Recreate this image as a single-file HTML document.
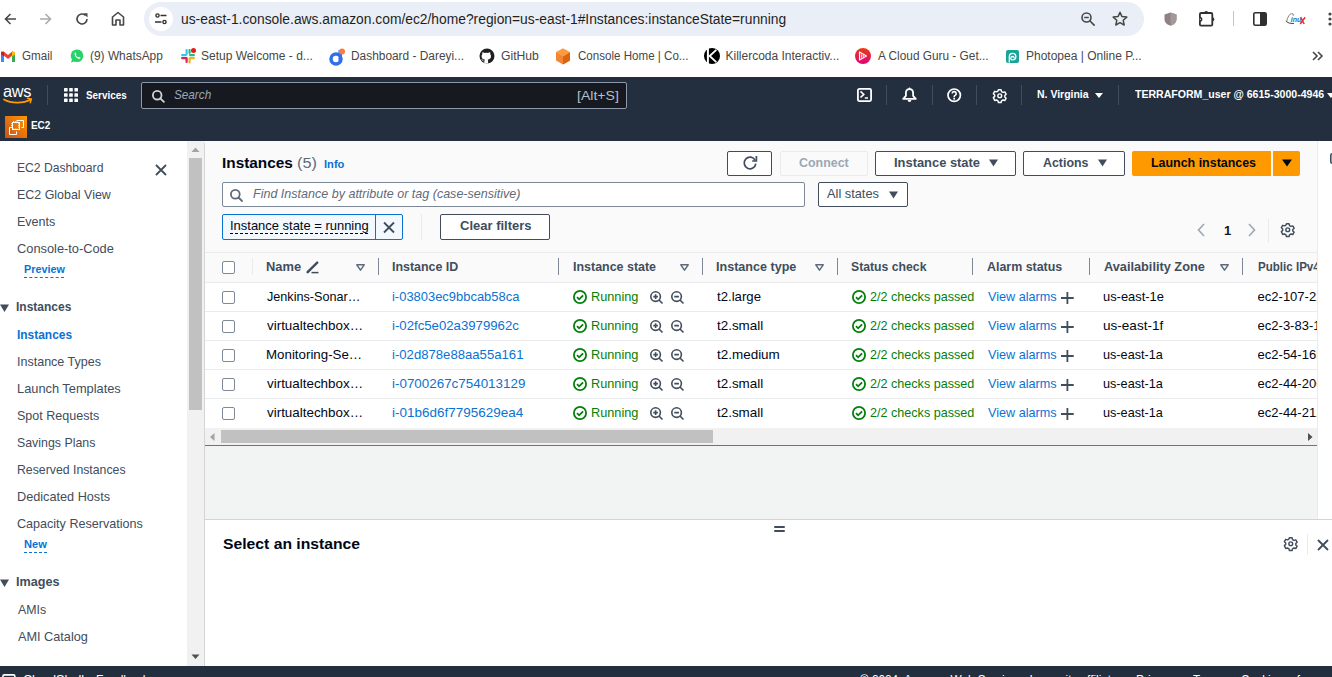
<!DOCTYPE html>
<html><head><meta charset="utf-8"><style>
html,body{margin:0;padding:0;width:1332px;height:677px;overflow:hidden;background:#fff;font-family:'Liberation Sans', sans-serif;}
.t{position:absolute;white-space:pre;line-height:normal;transform-origin:0 0;}
svg{overflow:visible}
</style></head><body>
<div style="position:absolute;left:0px;top:0px;width:1332px;height:77px;background:#ffffff"></div><svg style="position:absolute;left:3px;top:12px" width="14" height="14" viewBox="0 0 14 14"><path d="M13 7H2.5M7.5 2L2.5 7l5 5" stroke="#474747" stroke-width="1.6" fill="none"/></svg><svg style="position:absolute;left:39px;top:12px" width="14" height="14" viewBox="0 0 14 14"><path d="M1 7h10.5M6.5 2l5 5-5 5" stroke="#a8abb0" stroke-width="1.6" fill="none"/></svg><svg style="position:absolute;left:75px;top:12px" width="14" height="14" viewBox="0 0 14 14"><path d="M12 7A5 5 0 1 1 10.5 3.4" stroke="#474747" stroke-width="1.6" fill="none"/><path d="M8.2 1.2h4.3v4.3z" fill="#474747"/></svg><svg style="position:absolute;left:111px;top:11px" width="14" height="15" viewBox="0 0 14 15"><path d="M1.5 14V6L7 1.5 12.5 6V14H9V9H5v5z" stroke="#474747" stroke-width="1.6" fill="none" stroke-linejoin="round"/></svg><div style="position:absolute;left:144px;top:2px;width:1000px;height:34px;background:#eaeef6;border-radius:17px"></div><div style="position:absolute;left:149px;top:7px;width:24px;height:24px;background:#fff;border-radius:12px"></div><svg style="position:absolute;left:154px;top:12px" width="14" height="14" viewBox="0 0 14 14"><circle cx="3.5" cy="3.5" r="1.6" stroke="#303030" stroke-width="1.4" fill="none"/><path d="M6.5 3.5h6" stroke="#303030" stroke-width="1.5"/><circle cx="10.5" cy="10" r="1.6" stroke="#303030" stroke-width="1.4" fill="none"/><path d="M1 10h6.5" stroke="#303030" stroke-width="1.5"/></svg><svg style="position:absolute;left:1080.5px;top:11.5px" width="15" height="15" viewBox="0 0 15 15"><circle cx="5.5" cy="5.5" r="4.5" stroke="#474747" stroke-width="1.6" fill="none"/><path d="M3.2 5.5h4.6M8.8 8.8l4.8 4.8" stroke="#474747" stroke-width="1.6"/></svg><svg style="position:absolute;left:1112px;top:11px" width="16" height="16" viewBox="0 0 16 16"><path d="M8 1.2l2 4.4 4.8.5-3.6 3.2 1 4.7L8 11.6 3.8 14l1-4.7L1.2 6.1 6 5.6z" stroke="#474747" stroke-width="1.5" fill="none" stroke-linejoin="round"/></svg><svg style="position:absolute;left:1164px;top:12px" width="13" height="14" viewBox="0 0 13 14"><path d="M6.5 0.5L12.5 2.5V7c0 3.5-2.7 5.8-6 6.8C3.2 12.8 0.5 10.5 0.5 7V2.5z" fill="#8e8183"/><path d="M6.5 0.5L12.5 2.5V7c0 3.5-2.7 5.8-6 6.8z" fill="#a3999a"/></svg><svg style="position:absolute;left:1199px;top:10px" width="17" height="17" viewBox="0 0 17 17"><rect x="0.9" y="3" width="12.4" height="12.6" rx="1.2" stroke="#303030" stroke-width="1.8" fill="none"/><path d="M5.2 3a2 2 0 0 1 4 0z" fill="#303030"/><path d="M13.3 7.2a2 2 0 0 1 0 4z" fill="#303030"/><path d="M0.9 7.6a1.7 1.7 0 0 1 0 3.4" stroke="#303030" stroke-width="1.6" fill="#fff"/></svg><div style="position:absolute;left:1233px;top:11px;width:1px;height:15px;background:#a8c7fa"></div><svg style="position:absolute;left:1253px;top:12px" width="14" height="14" viewBox="0 0 14 14"><rect x="0.8" y="0.8" width="12.4" height="12.4" rx="1.5" stroke="#303030" stroke-width="1.6" fill="none"/><rect x="7" y="1" width="6" height="12" fill="#303030"/></svg><svg style="position:absolute;left:1285px;top:12px" width="22" height="13" viewBox="0 0 22 13"><path d="M0.8 9.2Q3.5 11.8 9 11.6" stroke="#444" stroke-width="1" fill="none"/><path d="M1.6 9.4Q3.5 2.2 6.5 1.6Q9.2 1.4 8.2 3.8" stroke="#777" stroke-width="0.9" fill="none"/><text x="5.8" y="10" font-size="7" font-style="italic" font-weight="bold" fill="#2a6fb5" font-family="Liberation Sans">inu</text><path d="M15.6 5.2L19.2 12M20.2 5.2Q17.5 8.5 15.3 12" stroke="#ee2a2a" stroke-width="1.5" fill="none"/></svg><svg style="position:absolute;left:1327px;top:12px" width="6" height="14" viewBox="0 0 6 14"><circle cx="3" cy="2" r="1.6" fill="#474747"/><circle cx="3" cy="7" r="1.6" fill="#474747"/><circle cx="3" cy="12" r="1.6" fill="#474747"/></svg><svg style="position:absolute;left:1px;top:51px" width="14" height="11" viewBox="0 0 14 11"><path d="M1.5 1.5L7 6l5.5-4.5" stroke="#ea4335" stroke-width="3" fill="none" stroke-linejoin="miter"/><rect x="0" y="2" width="3" height="9" rx="0.5" fill="#4285f4"/><rect x="11" y="2" width="3" height="9" rx="0.5" fill="#34a853"/><path d="M11 1.2l1.6-0.7c.8-.3 1.4.3 1.4 1.1V3.5L11 5.5z" fill="#fbbc04"/><path d="M3 1.2L1.4.5C.6.2 0 .8 0 1.6V3.5L3 5.5z" fill="#c5221f"/></svg><svg style="position:absolute;left:70px;top:49px" width="14" height="14" viewBox="0 0 14 14"><circle cx="7" cy="6.8" r="6.3" fill="#25d366"/><path d="M1 13.5l1.2-3.8 2.5 2.6z" fill="#25d366"/><path d="M4.6 4c.4-.6 1-.5 1.2 0l.6 1.3c.1.3-.3.7-.5 1 .4.8 1.2 1.6 2 2 .3-.2.6-.6 1-.5l1.3.6c.4.2.4.8-.1 1.2-1.5 1.3-5.8-1.8-5.5-5.6z" fill="#fff"/></svg><svg style="position:absolute;left:180px;top:48px" width="16" height="16" viewBox="0 0 16 16"><rect x="1" y="6" width="6" height="2.2" rx="1.1" fill="#36c5f0"/><rect x="5.5" y="1" width="2.2" height="6" rx="1.1" fill="#36c5f0"/><rect x="9" y="6" width="6" height="2.2" rx="1.1" fill="#2eb67d"/><rect x="8.5" y="1" width="2.2" height="5" rx="1.1" fill="#2eb67d"/><rect x="9" y="9" width="6" height="2.2" rx="1.1" fill="#ecb22e"/><rect x="8.5" y="9.5" width="2.2" height="6" rx="1.1" fill="#ecb22e"/><rect x="1" y="9" width="6" height="2.2" rx="1.1" fill="#e01e5a"/><rect x="5.5" y="9" width="2.2" height="6" rx="1.1" fill="#e01e5a"/><circle cx="13.5" cy="2.5" r="2.5" fill="#e01e1e"/></svg><svg style="position:absolute;left:329px;top:48px" width="17" height="17" viewBox="0 0 17 17"><circle cx="7" cy="11" r="5" stroke="#2f6fed" stroke-width="3.5" fill="none"/><rect x="9.5" y="2" width="3.5" height="12" fill="#2f6fed"/><circle cx="13" cy="3.5" r="3" fill="#ff7a3d"/></svg><svg style="position:absolute;left:479px;top:48px" width="16" height="16" viewBox="0 0 16 16"><circle cx="8" cy="8" r="7.5" fill="#1f1f1f"/><path d="M5.3 15.3v-2.2c-1.8.3-2.3-1-2.5-1.3-.2-.4-.7-.8-.7-.8h.6c.6.3.9.9.9.9.8 1.2 1.9.8 1.9.8.1-.5.3-.8.5-1-1.9-.2-3.4-1-3.4-3.6 0-.8.3-1.4.8-1.9-.1-.2-.3-.9.1-1.9 0 0 .6-.2 2 .7a7 7 0 0 1 3.6 0c1.4-.9 2-.7 2-.7.4 1 .2 1.7.1 1.9.5.5.8 1.1.8 1.9 0 2.6-1.6 3.4-3.4 3.6.3.2.5.7.5 1.3v2.4z" fill="#fff"/></svg><svg style="position:absolute;left:555px;top:48px" width="16" height="17" viewBox="0 0 16 17"><path d="M8 0.5l7 3.8v8.2l-7 4-7-4V4.3z" fill="#f58536"/><path d="M8 8.5l7-4.2v8.2l-7 4z" fill="#d9660f"/><path d="M1 4.3l7-3.8 7 3.8-7 4.2z" fill="#ff9a40"/></svg><svg style="position:absolute;left:704px;top:48px" width="16" height="16" viewBox="0 0 16 16"><circle cx="8" cy="8" r="8" fill="#000"/><path d="M3.9 0v16" stroke="#fff" stroke-width="2"/><path d="M12.3 1.8L5.6 8l6.7 6.2" stroke="#fff" stroke-width="1.8" fill="none"/></svg><svg style="position:absolute;left:855px;top:48px" width="16" height="16" viewBox="0 0 16 16"><defs><linearGradient id="acg" x1="0" y1="0" x2="0" y2="1"><stop offset="0" stop-color="#ea3d12"/><stop offset="1" stop-color="#e2007d"/></linearGradient></defs><circle cx="8" cy="8" r="8" fill="url(#acg)"/><path d="M4.5 4v8l7-4z" stroke="#fff" stroke-width="1.1" fill="none" stroke-linejoin="round"/><path d="M6.3 6.2v3.6M8.2 7v2" stroke="#fff" stroke-width="1"/></svg><svg style="position:absolute;left:1005.5px;top:49.5px" width="13" height="13" viewBox="0 0 13 13"><rect x="0" y="0" width="13" height="13" rx="2" fill="#18a497"/><path d="M3.3 12.5V6.6a3.3 3.3 0 1 1 3.3 3.3a1.7 1.7 0 1 1 1.6-1.7" stroke="#fff" stroke-width="1.3" fill="none"/></svg><svg style="position:absolute;left:1312px;top:51px" width="11" height="10" viewBox="0 0 11 10"><path d="M1 1l4 4-4 4M6 1l4 4-4 4" stroke="#474747" stroke-width="1.6" fill="none"/></svg><div style="position:absolute;left:0px;top:77px;width:1332px;height:64px;background:#232f3e"></div><svg style="position:absolute;left:3px;top:97px" width="30" height="8" viewBox="0 0 30 8"><path d="M1 2.5C8 6.5 20 7 27.5 2.5" stroke="#ff9900" stroke-width="1.8" fill="none" stroke-linecap="round"/><path d="M24.5 1.2l3.8 0.8-1 3.6" stroke="#ff9900" stroke-width="1.6" fill="none" stroke-linecap="round"/></svg><div style="position:absolute;left:47px;top:85px;width:1px;height:20px;background:#414d5c"></div><svg style="position:absolute;left:64px;top:88px" width="14" height="14" viewBox="0 0 14 14"><rect x="0" y="0" width="3.6" height="3.6" rx="0.6" fill="#fff"/><rect x="0" y="5.2" width="3.6" height="3.6" rx="0.6" fill="#fff"/><rect x="0" y="10.4" width="3.6" height="3.6" rx="0.6" fill="#fff"/><rect x="5.2" y="0" width="3.6" height="3.6" rx="0.6" fill="#fff"/><rect x="5.2" y="5.2" width="3.6" height="3.6" rx="0.6" fill="#fff"/><rect x="5.2" y="10.4" width="3.6" height="3.6" rx="0.6" fill="#fff"/><rect x="10.4" y="0" width="3.6" height="3.6" rx="0.6" fill="#fff"/><rect x="10.4" y="5.2" width="3.6" height="3.6" rx="0.6" fill="#fff"/><rect x="10.4" y="10.4" width="3.6" height="3.6" rx="0.6" fill="#fff"/></svg><div style="position:absolute;left:141px;top:82px;width:486px;height:27px;background:#161a20;border:1px solid #8d99a8;border-radius:2px;box-sizing:border-box"></div><svg style="position:absolute;left:152px;top:90px" width="13" height="13" viewBox="0 0 13 13"><circle cx="5.2" cy="5.2" r="4.3" stroke="#d1d5db" stroke-width="1.8" fill="none"/><path d="M8.3 8.3l3.6 3.6" stroke="#d1d5db" stroke-width="1.8" stroke-linecap="round"/></svg><svg style="position:absolute;left:857px;top:88px" width="15" height="14" viewBox="0 0 15 14"><rect x="0.9" y="0.9" width="13.2" height="12.2" rx="1.5" stroke="#fff" stroke-width="1.8" fill="none"/><path d="M3.5 3.3l3.3 3.1-3.3 3.1M7.8 10h3.2" stroke="#fff" stroke-width="1.6" fill="none"/></svg><div style="position:absolute;left:886px;top:85px;width:1px;height:20px;background:#414d5c"></div><div style="position:absolute;left:932px;top:85px;width:1px;height:20px;background:#414d5c"></div><div style="position:absolute;left:976px;top:85px;width:1px;height:20px;background:#414d5c"></div><div style="position:absolute;left:1021px;top:85px;width:1px;height:20px;background:#414d5c"></div><div style="position:absolute;left:1118px;top:85px;width:1px;height:20px;background:#414d5c"></div><svg style="position:absolute;left:902px;top:87px" width="15" height="16" viewBox="0 0 15 16"><path d="M7.5 2.2c-2.2 0-3.6 1.8-3.6 4v2.6L1.2 11.8h12.6L11.1 8.8V6.2c0-2.2-1.4-4-3.6-4z" stroke="#fff" stroke-width="1.8" fill="none" stroke-linejoin="round"/><circle cx="7.5" cy="1.6" r="1" fill="#fff"/><path d="M5.6 13a1.9 1.9 0 0 0 3.8 0z" fill="#fff"/></svg><svg style="position:absolute;left:947px;top:88px" width="15" height="15" viewBox="0 0 15 15"><circle cx="7.2" cy="7.2" r="6.2" stroke="#fff" stroke-width="1.7" fill="none"/><path d="M5.2 5.6a2 2 0 1 1 2.9 1.8c-.6.3-.9.7-.9 1.4v.5" stroke="#fff" stroke-width="1.6" fill="none"/><circle cx="7.2" cy="10.8" r="1" fill="#fff"/></svg><svg style="position:absolute;left:993px;top:88.5px" width="14" height="14" viewBox="0 0 14 14"><g transform="scale(0.9)"><path d="M6 0.9h3l.5 2 1.6.9 2-.6 1.5 2.6-1.5 1.4v1.6l1.5 1.4-1.5 2.6-2-.6-1.6.9-.5 2H6l-.5-2-1.6-.9-2 .6L.4 9.6l1.5-1.4V6.6L.4 5.2l1.5-2.6 2 .6 1.6-.9z" stroke="#fff" stroke-width="1.6" fill="none" stroke-linejoin="round"/><circle cx="7.5" cy="7.5" r="2.1" stroke="#fff" stroke-width="1.6" fill="none"/></g></svg><svg style="position:absolute;left:1095px;top:93px" width="8" height="6" viewBox="0 0 8 6"><path d="M0 0h8L4 5z" fill="#fff"/></svg><svg style="position:absolute;left:1327px;top:93px" width="8" height="6" viewBox="0 0 8 6"><path d="M0 0h8L4 5z" fill="#fff"/></svg><div style="position:absolute;left:5px;top:116px;width:22px;height:22px;background:linear-gradient(45deg,#c8511b,#ff9900)"></div><svg style="position:absolute;left:5px;top:116px" width="22" height="22" viewBox="0 0 22 22"><path d="M11.5 4.5h7v7h-2" stroke="#fff" stroke-width="1" fill="none"/><path d="M7.5 11.5h-3v7h7v-3" stroke="#fff" stroke-width="1" fill="none"/><rect x="7.5" y="6.5" width="7" height="7" stroke="#fff" stroke-width="1" fill="none"/><path d="M8.5 5v1.5M8.5 12.5V14" stroke="#fff" stroke-width="0.8"/><path d="M10.3 5v1.5M10.3 12.5V14" stroke="#fff" stroke-width="0.8"/><path d="M12.1 5v1.5M12.1 12.5V14" stroke="#fff" stroke-width="0.8"/><path d="M6 7.7h1.5M13 7.7h1.5" stroke="#fff" stroke-width="0.8"/><path d="M6 9.5h1.5M13 9.5h1.5" stroke="#fff" stroke-width="0.8"/><path d="M6 11.3h1.5M13 11.3h1.5" stroke="#fff" stroke-width="0.8"/></svg><div style="position:absolute;left:0px;top:141px;width:187px;height:525px;background:#ffffff"></div><div style="position:absolute;left:187px;top:141px;width:18px;height:525px;background:#f1f1f1"></div><div style="position:absolute;left:189px;top:158px;width:13px;height:252px;background:#c1c1c1"></div><svg style="position:absolute;left:191px;top:147px" width="9" height="6" viewBox="0 0 9 6"><path d="M0.5 5h8L4.5 0.5z" fill="#a3a3a3"/></svg><svg style="position:absolute;left:191px;top:654px" width="9" height="6" viewBox="0 0 9 6"><path d="M0.5 0.5h8L4.5 5z" fill="#505050"/></svg><svg style="position:absolute;left:155px;top:164px" width="12" height="12" viewBox="0 0 12 12"><path d="M1 1l10 10M11 1L1 11" stroke="#414d5c" stroke-width="1.8"/></svg><div style="position:absolute;left:24px;top:277px;width:40px;height:1px;border-top:1px dashed #0972d3"></div><div style="position:absolute;left:24px;top:552px;width:23px;height:1px;border-top:1px dashed #0972d3"></div><svg style="position:absolute;left:0px;top:304px" width="9" height="8" viewBox="0 0 9 8"><path d="M0 0.5h9L4.5 8z" fill="#414d5c"/></svg><svg style="position:absolute;left:0px;top:579px" width="9" height="8" viewBox="0 0 9 8"><path d="M0 0.5h9L4.5 8z" fill="#414d5c"/></svg><div style="position:absolute;left:204px;top:143px;width:1px;height:523px;background:#d5d5d5"></div><div style="position:absolute;left:205px;top:141px;width:1112px;height:378px;background:#f2f3f3"></div><div style="position:absolute;left:205px;top:141px;width:1112px;height:287px;background:#fafafa"></div><div style="position:absolute;left:1317px;top:141px;width:15px;height:378px;background:#ffffff;border-left:1px solid #e9ebed;box-sizing:border-box"></div><svg style="position:absolute;left:1330px;top:153px" width="8" height="11" viewBox="0 0 8 11"><rect x="0.8" y="0.8" width="8" height="9.4" rx="1.5" stroke="#414d5c" stroke-width="1.6" fill="none"/></svg><div style="position:absolute;left:727px;top:151px;width:45px;height:25px;box-sizing:border-box;border:1px solid #414d5c;border-radius:2px;background:#fff"></div><svg style="position:absolute;left:742px;top:155px" width="16" height="16" viewBox="0 0 16 16"><path d="M13.8 8.6A5.8 5.8 0 1 1 13.2 5.3" stroke="#414d5c" stroke-width="1.7" fill="none"/><path d="M14.4 1.1V6H10.2" stroke="#414d5c" stroke-width="1.7" fill="none"/></svg><div style="position:absolute;left:780px;top:151px;width:88px;height:25px;box-sizing:border-box;border:1px solid #e9ebed;border-radius:2px;background:#fafafa"></div><div style="position:absolute;left:875px;top:151px;width:141px;height:25px;box-sizing:border-box;border:1px solid #414d5c;border-radius:2px;background:#fff"></div><svg style="position:absolute;left:989px;top:159px" width="9" height="8" viewBox="0 0 9 8"><path d="M0 0.5h9L4.5 7.5z" fill="#414d5c"/></svg><div style="position:absolute;left:1023px;top:151px;width:102px;height:25px;box-sizing:border-box;border:1px solid #414d5c;border-radius:2px;background:#fff"></div><svg style="position:absolute;left:1098px;top:159px" width="9" height="8" viewBox="0 0 9 8"><path d="M0 0.5h9L4.5 7.5z" fill="#414d5c"/></svg><div style="position:absolute;left:1132px;top:151px;width:139px;height:25px;background:#ff9900;border-radius:2px 0 0 2px"></div><div style="position:absolute;left:1273px;top:151px;width:27px;height:25px;background:#ff9900;border-radius:0 2px 2px 0"></div><svg style="position:absolute;left:1281.5px;top:159px" width="10" height="8" viewBox="0 0 10 8"><path d="M0 0.5h10L5 7.5z" fill="#000716"/></svg><div style="position:absolute;left:222px;top:182px;width:583px;height:25px;box-sizing:border-box;border:1px solid #7d8998;border-radius:2px;background:#fff"></div><svg style="position:absolute;left:230px;top:189px" width="13" height="13" viewBox="0 0 13 13"><circle cx="5.3" cy="5.3" r="4.4" stroke="#5f6b7a" stroke-width="1.8" fill="none"/><path d="M8.5 8.5l3.5 3.5" stroke="#5f6b7a" stroke-width="1.8" stroke-linecap="round"/></svg><div style="position:absolute;left:818px;top:182px;width:90px;height:25px;box-sizing:border-box;border:1px solid #414d5c;border-radius:2px;background:#fff"></div><svg style="position:absolute;left:889px;top:191px" width="9" height="8" viewBox="0 0 9 8"><path d="M0 0.5h9L4.5 7.5z" fill="#414d5c"/></svg><div style="position:absolute;left:222px;top:214px;width:181px;height:26px;box-sizing:border-box;border:1px solid #0972d3;border-radius:2px;background:#f2f8fd"></div><div style="position:absolute;left:375px;top:215px;width:1px;height:24px;background:#0972d3"></div><div style="position:absolute;left:230px;top:233px;width:138px;height:1px;border-top:1px dashed #000716"></div><svg style="position:absolute;left:383px;top:222px" width="12" height="11" viewBox="0 0 12 11"><path d="M1 0.5l10 10M11 0.5L1 10.5" stroke="#414d5c" stroke-width="1.8"/></svg><div style="position:absolute;left:421px;top:214px;width:1px;height:26px;background:#e9ebed"></div><div style="position:absolute;left:440px;top:214px;width:110px;height:26px;box-sizing:border-box;border:1px solid #414d5c;border-radius:2px;background:#fff"></div><svg style="position:absolute;left:1197px;top:223px" width="8" height="14" viewBox="0 0 8 14"><path d="M7 1L1.5 7 7 13" stroke="#9ba7b6" stroke-width="1.6" fill="none"/></svg><svg style="position:absolute;left:1248px;top:223px" width="8" height="14" viewBox="0 0 8 14"><path d="M1 1l5.5 6L1 13" stroke="#9ba7b6" stroke-width="1.6" fill="none"/></svg><div style="position:absolute;left:1268px;top:219px;width:1px;height:24px;background:#e9ebed"></div><svg style="position:absolute;left:1281.3px;top:223.3px" width="14" height="14" viewBox="0 0 14 14"><g transform="scale(0.9)"><path d="M6 0.9h3l.5 2 1.6.9 2-.6 1.5 2.6-1.5 1.4v1.6l1.5 1.4-1.5 2.6-2-.6-1.6.9-.5 2H6l-.5-2-1.6-.9-2 .6L.4 9.6l1.5-1.4V6.6L.4 5.2l1.5-2.6 2 .6 1.6-.9z" stroke="#414d5c" stroke-width="1.6" fill="none" stroke-linejoin="round"/><circle cx="7.5" cy="7.5" r="2.1" stroke="#414d5c" stroke-width="1.6" fill="none"/></g></svg><div style="position:absolute;left:205px;top:252px;width:1112px;height:1px;background:#e9ebed"></div><div style="position:absolute;left:205px;top:282px;width:1112px;height:1px;background:#e9ebed"></div><div style="position:absolute;left:205px;top:283px;width:1112px;height:145px;background:#ffffff"></div><div style="position:absolute;left:205px;top:311px;width:1112px;height:1px;background:#e9ebed"></div><div style="position:absolute;left:205px;top:340px;width:1112px;height:1px;background:#e9ebed"></div><div style="position:absolute;left:205px;top:369px;width:1112px;height:1px;background:#e9ebed"></div><div style="position:absolute;left:205px;top:398px;width:1112px;height:1px;background:#e9ebed"></div><div style="position:absolute;left:222px;top:261px;width:13px;height:13px;box-sizing:border-box;border:1.5px solid #7d8998;border-radius:2px;background:#fff"></div><div style="position:absolute;left:252px;top:258px;width:1px;height:17px;background:#e9ebed"></div><svg style="position:absolute;left:306px;top:261px" width="13" height="13" viewBox="0 0 13 13"><path d="M1.6 11.2L11.2 1.6" stroke="#414d5c" stroke-width="2.4" stroke-linecap="round"/><path d="M1.2 11.8l0.6-2.2 1.6 1.6z" fill="#414d5c"/><path d="M5.5 11.6h7" stroke="#414d5c" stroke-width="1.5"/></svg><svg style="position:absolute;left:356px;top:264px" width="9" height="7" viewBox="0 0 9 7"><path d="M0.8 0.8h7.4L4.5 6.2z" stroke="#5f6b7a" stroke-width="1.5" fill="none" stroke-linejoin="round"/></svg><div style="position:absolute;left:378px;top:258px;width:1px;height:17px;background:#7d8998"></div><div style="position:absolute;left:558px;top:258px;width:1px;height:17px;background:#7d8998"></div><div style="position:absolute;left:702px;top:258px;width:1px;height:17px;background:#7d8998"></div><div style="position:absolute;left:837px;top:258px;width:1px;height:17px;background:#7d8998"></div><div style="position:absolute;left:972px;top:258px;width:1px;height:17px;background:#7d8998"></div><div style="position:absolute;left:1089px;top:258px;width:1px;height:17px;background:#7d8998"></div><div style="position:absolute;left:1242px;top:258px;width:1px;height:17px;background:#7d8998"></div><svg style="position:absolute;left:680px;top:264px" width="9" height="7" viewBox="0 0 9 7"><path d="M0.8 0.8h7.4L4.5 6.2z" stroke="#5f6b7a" stroke-width="1.5" fill="none" stroke-linejoin="round"/></svg><svg style="position:absolute;left:815px;top:264px" width="9" height="7" viewBox="0 0 9 7"><path d="M0.8 0.8h7.4L4.5 6.2z" stroke="#5f6b7a" stroke-width="1.5" fill="none" stroke-linejoin="round"/></svg><svg style="position:absolute;left:1220px;top:264px" width="9" height="7" viewBox="0 0 9 7"><path d="M0.8 0.8h7.4L4.5 6.2z" stroke="#5f6b7a" stroke-width="1.5" fill="none" stroke-linejoin="round"/></svg><div style="position:absolute;left:222px;top:291px;width:13px;height:13px;box-sizing:border-box;border:1.5px solid #7d8998;border-radius:2px;background:#fff"></div><svg style="position:absolute;left:573px;top:290px" width="14" height="14" viewBox="0 0 14 14"><circle cx="7" cy="7" r="6.1" stroke="#037f0c" stroke-width="1.8" fill="none"/><path d="M4 7.2l2.1 2.1 4-4" stroke="#037f0c" stroke-width="1.8" fill="none"/></svg><svg style="position:absolute;left:649.5px;top:290.5px" width="14" height="14" viewBox="0 0 14 14"><circle cx="5.6" cy="5.6" r="4.8" stroke="#414d5c" stroke-width="1.6" fill="none"/><path d="M3.3 5.6h4.6M5.6 3.3v4.6M9 9l3.5 3.5" stroke="#414d5c" stroke-width="1.6"/></svg><svg style="position:absolute;left:670.5px;top:290.5px" width="14" height="14" viewBox="0 0 14 14"><circle cx="5.6" cy="5.6" r="4.8" stroke="#414d5c" stroke-width="1.6" fill="none"/><path d="M3.3 5.6h4.6M9 9l3.5 3.5" stroke="#414d5c" stroke-width="1.6"/></svg><svg style="position:absolute;left:852px;top:290px" width="14" height="14" viewBox="0 0 14 14"><circle cx="7" cy="7" r="6.1" stroke="#037f0c" stroke-width="1.8" fill="none"/><path d="M4 7.2l2.1 2.1 4-4" stroke="#037f0c" stroke-width="1.8" fill="none"/></svg><svg style="position:absolute;left:1061px;top:291.5px" width="13" height="12" viewBox="0 0 13 12"><path d="M6.4 0v12M0 6h12.7" stroke="#414d5c" stroke-width="1.8"/></svg><div style="position:absolute;left:222px;top:320px;width:13px;height:13px;box-sizing:border-box;border:1.5px solid #7d8998;border-radius:2px;background:#fff"></div><svg style="position:absolute;left:573px;top:319px" width="14" height="14" viewBox="0 0 14 14"><circle cx="7" cy="7" r="6.1" stroke="#037f0c" stroke-width="1.8" fill="none"/><path d="M4 7.2l2.1 2.1 4-4" stroke="#037f0c" stroke-width="1.8" fill="none"/></svg><svg style="position:absolute;left:649.5px;top:319.5px" width="14" height="14" viewBox="0 0 14 14"><circle cx="5.6" cy="5.6" r="4.8" stroke="#414d5c" stroke-width="1.6" fill="none"/><path d="M3.3 5.6h4.6M5.6 3.3v4.6M9 9l3.5 3.5" stroke="#414d5c" stroke-width="1.6"/></svg><svg style="position:absolute;left:670.5px;top:319.5px" width="14" height="14" viewBox="0 0 14 14"><circle cx="5.6" cy="5.6" r="4.8" stroke="#414d5c" stroke-width="1.6" fill="none"/><path d="M3.3 5.6h4.6M9 9l3.5 3.5" stroke="#414d5c" stroke-width="1.6"/></svg><svg style="position:absolute;left:852px;top:319px" width="14" height="14" viewBox="0 0 14 14"><circle cx="7" cy="7" r="6.1" stroke="#037f0c" stroke-width="1.8" fill="none"/><path d="M4 7.2l2.1 2.1 4-4" stroke="#037f0c" stroke-width="1.8" fill="none"/></svg><svg style="position:absolute;left:1061px;top:320.5px" width="13" height="12" viewBox="0 0 13 12"><path d="M6.4 0v12M0 6h12.7" stroke="#414d5c" stroke-width="1.8"/></svg><div style="position:absolute;left:222px;top:349px;width:13px;height:13px;box-sizing:border-box;border:1.5px solid #7d8998;border-radius:2px;background:#fff"></div><svg style="position:absolute;left:573px;top:348px" width="14" height="14" viewBox="0 0 14 14"><circle cx="7" cy="7" r="6.1" stroke="#037f0c" stroke-width="1.8" fill="none"/><path d="M4 7.2l2.1 2.1 4-4" stroke="#037f0c" stroke-width="1.8" fill="none"/></svg><svg style="position:absolute;left:649.5px;top:348.5px" width="14" height="14" viewBox="0 0 14 14"><circle cx="5.6" cy="5.6" r="4.8" stroke="#414d5c" stroke-width="1.6" fill="none"/><path d="M3.3 5.6h4.6M5.6 3.3v4.6M9 9l3.5 3.5" stroke="#414d5c" stroke-width="1.6"/></svg><svg style="position:absolute;left:670.5px;top:348.5px" width="14" height="14" viewBox="0 0 14 14"><circle cx="5.6" cy="5.6" r="4.8" stroke="#414d5c" stroke-width="1.6" fill="none"/><path d="M3.3 5.6h4.6M9 9l3.5 3.5" stroke="#414d5c" stroke-width="1.6"/></svg><svg style="position:absolute;left:852px;top:348px" width="14" height="14" viewBox="0 0 14 14"><circle cx="7" cy="7" r="6.1" stroke="#037f0c" stroke-width="1.8" fill="none"/><path d="M4 7.2l2.1 2.1 4-4" stroke="#037f0c" stroke-width="1.8" fill="none"/></svg><svg style="position:absolute;left:1061px;top:349.5px" width="13" height="12" viewBox="0 0 13 12"><path d="M6.4 0v12M0 6h12.7" stroke="#414d5c" stroke-width="1.8"/></svg><div style="position:absolute;left:222px;top:378px;width:13px;height:13px;box-sizing:border-box;border:1.5px solid #7d8998;border-radius:2px;background:#fff"></div><svg style="position:absolute;left:573px;top:377px" width="14" height="14" viewBox="0 0 14 14"><circle cx="7" cy="7" r="6.1" stroke="#037f0c" stroke-width="1.8" fill="none"/><path d="M4 7.2l2.1 2.1 4-4" stroke="#037f0c" stroke-width="1.8" fill="none"/></svg><svg style="position:absolute;left:649.5px;top:377.5px" width="14" height="14" viewBox="0 0 14 14"><circle cx="5.6" cy="5.6" r="4.8" stroke="#414d5c" stroke-width="1.6" fill="none"/><path d="M3.3 5.6h4.6M5.6 3.3v4.6M9 9l3.5 3.5" stroke="#414d5c" stroke-width="1.6"/></svg><svg style="position:absolute;left:670.5px;top:377.5px" width="14" height="14" viewBox="0 0 14 14"><circle cx="5.6" cy="5.6" r="4.8" stroke="#414d5c" stroke-width="1.6" fill="none"/><path d="M3.3 5.6h4.6M9 9l3.5 3.5" stroke="#414d5c" stroke-width="1.6"/></svg><svg style="position:absolute;left:852px;top:377px" width="14" height="14" viewBox="0 0 14 14"><circle cx="7" cy="7" r="6.1" stroke="#037f0c" stroke-width="1.8" fill="none"/><path d="M4 7.2l2.1 2.1 4-4" stroke="#037f0c" stroke-width="1.8" fill="none"/></svg><svg style="position:absolute;left:1061px;top:378.5px" width="13" height="12" viewBox="0 0 13 12"><path d="M6.4 0v12M0 6h12.7" stroke="#414d5c" stroke-width="1.8"/></svg><div style="position:absolute;left:222px;top:407px;width:13px;height:13px;box-sizing:border-box;border:1.5px solid #7d8998;border-radius:2px;background:#fff"></div><svg style="position:absolute;left:573px;top:406px" width="14" height="14" viewBox="0 0 14 14"><circle cx="7" cy="7" r="6.1" stroke="#037f0c" stroke-width="1.8" fill="none"/><path d="M4 7.2l2.1 2.1 4-4" stroke="#037f0c" stroke-width="1.8" fill="none"/></svg><svg style="position:absolute;left:649.5px;top:406.5px" width="14" height="14" viewBox="0 0 14 14"><circle cx="5.6" cy="5.6" r="4.8" stroke="#414d5c" stroke-width="1.6" fill="none"/><path d="M3.3 5.6h4.6M5.6 3.3v4.6M9 9l3.5 3.5" stroke="#414d5c" stroke-width="1.6"/></svg><svg style="position:absolute;left:670.5px;top:406.5px" width="14" height="14" viewBox="0 0 14 14"><circle cx="5.6" cy="5.6" r="4.8" stroke="#414d5c" stroke-width="1.6" fill="none"/><path d="M3.3 5.6h4.6M9 9l3.5 3.5" stroke="#414d5c" stroke-width="1.6"/></svg><svg style="position:absolute;left:852px;top:406px" width="14" height="14" viewBox="0 0 14 14"><circle cx="7" cy="7" r="6.1" stroke="#037f0c" stroke-width="1.8" fill="none"/><path d="M4 7.2l2.1 2.1 4-4" stroke="#037f0c" stroke-width="1.8" fill="none"/></svg><svg style="position:absolute;left:1061px;top:407.5px" width="13" height="12" viewBox="0 0 13 12"><path d="M6.4 0v12M0 6h12.7" stroke="#414d5c" stroke-width="1.8"/></svg><div style="position:absolute;left:205px;top:428px;width:1112px;height:17px;background:#f1f1f1"></div><div style="position:absolute;left:221px;top:430px;width:492px;height:13px;background:#c1c1c1"></div><svg style="position:absolute;left:210px;top:433px" width="5" height="8" viewBox="0 0 5 8"><path d="M4.5 0v8L0 4z" fill="#a3a3a3"/></svg><svg style="position:absolute;left:1308px;top:433px" width="5" height="8" viewBox="0 0 5 8"><path d="M0 0v8l4.5-4z" fill="#505050"/></svg><div style="position:absolute;left:205px;top:445px;width:1112px;height:1px;background:#6b7677"></div><div style="position:absolute;left:205px;top:519px;width:1127px;height:147px;background:#ffffff"></div><div style="position:absolute;left:205px;top:519px;width:1127px;height:1px;background:#d1d5db"></div><div style="position:absolute;left:774px;top:525.5px;width:11px;height:2px;background:#414d5c;border-radius:1px"></div><div style="position:absolute;left:774px;top:530px;width:11px;height:2px;background:#414d5c;border-radius:1px"></div><svg style="position:absolute;left:1284.3px;top:537.3px" width="14" height="14" viewBox="0 0 14 14"><g transform="scale(0.9)"><path d="M6 0.9h3l.5 2 1.6.9 2-.6 1.5 2.6-1.5 1.4v1.6l1.5 1.4-1.5 2.6-2-.6-1.6.9-.5 2H6l-.5-2-1.6-.9-2 .6L.4 9.6l1.5-1.4V6.6L.4 5.2l1.5-2.6 2 .6 1.6-.9z" stroke="#414d5c" stroke-width="1.6" fill="none" stroke-linejoin="round"/><circle cx="7.5" cy="7.5" r="2.1" stroke="#414d5c" stroke-width="1.6" fill="none"/></g></svg><div style="position:absolute;left:1307px;top:534px;width:1px;height:21px;background:#e9ebed"></div><svg style="position:absolute;left:1317px;top:538.5px" width="12" height="12" viewBox="0 0 12 12"><path d="M1 1l10 10M11 1L1 11" stroke="#414d5c" stroke-width="1.8"/></svg><div style="position:absolute;left:0px;top:666px;width:1332px;height:11px;background:#232f3e"></div><svg style="position:absolute;left:2px;top:673.5px" width="14" height="12" viewBox="0 0 14 12"><rect x="0.9" y="0.9" width="12" height="11" rx="1.5" stroke="#fff" stroke-width="1.6" fill="none"/></svg>
<div class="t" style="left:181.01px;top:11px;font-size:14px;color:#1f1f1f;transform:scaleX(0.9869);">us-east-1.console.aws.amazon.com/ec2/home?region=us-east-1#Instances:instanceState=running</div><div class="t" style="left:22.00px;top:49px;font-size:12px;color:#474747;transform:scaleX(0.9677);">Gmail</div><div class="t" style="left:90.01px;top:49px;font-size:12px;color:#474747;transform:scaleX(0.9931);">(9) WhatsApp</div><div class="t" style="left:201.00px;top:49px;font-size:12px;color:#474747;transform:scaleX(1.0000);">Setup Welcome - d...</div><div class="t" style="left:350.51px;top:49px;font-size:12px;color:#474747;transform:scaleX(0.9911);">Dashboard - Dareyi...</div><div class="t" style="left:501.00px;top:49px;font-size:12px;color:#474747;transform:scaleX(1.0135);">GitHub</div><div class="t" style="left:577.50px;top:49px;font-size:12px;color:#474747;transform:scaleX(0.9649);">Console Home | Co...</div><div class="t" style="left:725.50px;top:49px;font-size:12px;color:#474747;transform:scaleX(1.0000);">Killercoda Interactiv...</div><div class="t" style="left:877.50px;top:49px;font-size:12px;color:#474747;transform:scaleX(0.9865);">A Cloud Guru - Get...</div><div class="t" style="left:1026.00px;top:49px;font-size:12px;color:#474747;transform:scaleX(1.0000);">Photopea | Online P...</div><div class="t" style="left:3.48px;top:82.5px;font-size:16px;color:#ffffff;letter-spacing:-0.3px;transform:scaleX(1.0192);">aws</div><div class="t" style="left:85.50px;top:89px;font-size:11.5px;color:#ffffff;font-weight:bold;transform:scaleX(0.8617);">Services</div><div class="t" style="left:173.70px;top:87px;font-size:13px;color:#9ba7b6;font-style:italic;transform:scaleX(0.9024);">Search</div><div class="t" style="left:576.92px;top:88px;font-size:13px;color:#b6bec9;transform:scaleX(1.0811);">[Alt+S]</div><div class="t" style="left:1037.09px;top:88px;font-size:11.5px;color:#ffffff;font-weight:bold;transform:scaleX(0.9107);">N. Virginia</div><div class="t" style="left:1135.00px;top:88px;font-size:11.5px;color:#ffffff;font-weight:bold;transform:scaleX(0.9175);">TERRAFORM_user @ 6615-3000-4946</div><div class="t" style="left:31.10px;top:119px;font-size:11px;color:#ffffff;font-weight:bold;transform:scaleX(0.9000);">EC2</div><div class="t" style="left:16.57px;top:160px;font-size:13px;color:#414d5c;transform:scaleX(0.9341);">EC2 Dashboard</div><div class="t" style="left:16.54px;top:187px;font-size:13px;color:#414d5c;transform:scaleX(0.9567);">EC2 Global View</div><div class="t" style="left:16.54px;top:214px;font-size:13px;color:#414d5c;transform:scaleX(0.9632);">Events</div><div class="t" style="left:16.51px;top:241px;font-size:13px;color:#414d5c;transform:scaleX(0.9856);">Console-to-Code</div><div class="t" style="left:16.54px;top:354px;font-size:13px;color:#414d5c;transform:scaleX(0.9628);">Instance Types</div><div class="t" style="left:16.51px;top:381px;font-size:13px;color:#414d5c;transform:scaleX(0.9856);">Launch Templates</div><div class="t" style="left:16.54px;top:408px;font-size:13px;color:#414d5c;transform:scaleX(0.9643);">Spot Requests</div><div class="t" style="left:16.55px;top:435px;font-size:13px;color:#414d5c;transform:scaleX(0.9506);">Savings Plans</div><div class="t" style="left:16.56px;top:462px;font-size:13px;color:#414d5c;transform:scaleX(0.9447);">Reserved Instances</div><div class="t" style="left:16.52px;top:489px;font-size:13px;color:#414d5c;transform:scaleX(0.9755);">Dedicated Hosts</div><div class="t" style="left:16.53px;top:516px;font-size:13px;color:#414d5c;transform:scaleX(0.9667);">Capacity Reservations</div><div class="t" style="left:17.50px;top:602px;font-size:13px;color:#414d5c;transform:scaleX(0.9483);">AMIs</div><div class="t" style="left:17.50px;top:629px;font-size:13px;color:#414d5c;transform:scaleX(0.9761);">AMI Catalog</div><div class="t" style="left:24.22px;top:263px;font-size:11px;color:#0972d3;font-weight:bold;transform:scaleX(0.9805);">Preview</div><div class="t" style="left:23.99px;top:538px;font-size:11px;color:#0972d3;font-weight:bold;transform:scaleX(1.0091);">New</div><div class="t" style="left:15.68px;top:299px;font-size:13px;color:#414d5c;font-weight:bold;transform:scaleX(0.9220);">Instances</div><div class="t" style="left:16.68px;top:327px;font-size:13px;color:#0972d3;font-weight:bold;transform:scaleX(0.9186);">Instances</div><div class="t" style="left:15.53px;top:574px;font-size:13px;color:#414d5c;font-weight:bold;transform:scaleX(0.9721);">Images</div><div class="t" style="left:221.91px;top:154px;font-size:15.5px;color:#000716;font-weight:bold;transform:scaleX(0.9914);">Instances</div><div class="t" style="left:296.95px;top:154px;font-size:15.5px;color:#5f6b7a;transform:scaleX(1.0529);">(5)</div><div class="t" style="left:323.79px;top:158px;font-size:11px;color:#0972d3;font-weight:bold;transform:scaleX(1.0105);">Info</div><div class="t" style="left:799.00px;top:155px;font-size:13px;color:#9ba7b6;font-weight:bold;transform:scaleX(0.9558);">Connect</div><div class="t" style="left:893.51px;top:155px;font-size:13px;color:#414d5c;font-weight:bold;transform:scaleX(0.9918);">Instance state</div><div class="t" style="left:1043.00px;top:155px;font-size:13px;color:#414d5c;font-weight:bold;transform:scaleX(0.9532);">Actions</div><div class="t" style="left:1151.04px;top:155px;font-size:13px;color:#000716;font-weight:bold;transform:scaleX(0.9565);">Launch instances</div><div class="t" style="left:252.50px;top:186px;font-size:13px;color:#5f6b7a;font-style:italic;transform:scaleX(0.9639);">Find Instance by attribute or tag (case-sensitive)</div><div class="t" style="left:826.60px;top:186px;font-size:13px;color:#414d5c;transform:scaleX(0.9846);">All states</div><div class="t" style="left:229.50px;top:218px;font-size:13px;color:#000716;transform:scaleX(0.9964);">Instance state = running</div><div class="t" style="left:460.00px;top:218px;font-size:13px;color:#414d5c;font-weight:bold;transform:scaleX(1.0000);">Clear filters</div><div class="t" style="left:1224.00px;top:222.5px;font-size:13px;color:#16191f;font-weight:bold;">1</div><div class="t" style="left:266.41px;top:259px;font-size:13px;color:#414d5c;font-weight:bold;transform:scaleX(0.9912);">Name</div><div class="t" style="left:392.04px;top:259px;font-size:13px;color:#414d5c;font-weight:bold;transform:scaleX(0.9559);">Instance ID</div><div class="t" style="left:572.54px;top:259px;font-size:13px;color:#414d5c;font-weight:bold;transform:scaleX(0.9576);">Instance state</div><div class="t" style="left:716.43px;top:259px;font-size:13px;color:#414d5c;font-weight:bold;transform:scaleX(0.9671);">Instance type</div><div class="t" style="left:851.06px;top:259px;font-size:13px;color:#414d5c;font-weight:bold;transform:scaleX(0.9405);">Status check</div><div class="t" style="left:987.40px;top:259px;font-size:13px;color:#414d5c;font-weight:bold;transform:scaleX(0.9551);">Alarm status</div><div class="t" style="left:1104.20px;top:259px;font-size:13px;color:#414d5c;font-weight:bold;transform:scaleX(0.9804);">Availability Zone</div><div style="position:absolute;left:1257.6px;top:257px;width:59.4px;height:18.2px;overflow:hidden"><div class="t" style="left:0;top:2px;font-size:13px;color:#414d5c;font-weight:bold;transform:scaleX(0.89);">Public IPv4 DNS</div></div><div class="t" style="left:267.40px;top:289px;font-size:13px;color:#000716;transform:scaleX(0.9716);">Jenkins-Sonar…</div><div class="t" style="left:392.00px;top:289px;font-size:13px;color:#0972d3;transform:scaleX(0.9953);">i-03803ec9bbcab58ca</div><div class="t" style="left:591.02px;top:289px;font-size:13px;color:#037f0c;transform:scaleX(0.9787);">Running</div><div class="t" style="left:717.40px;top:289px;font-size:13px;color:#000716;transform:scaleX(1.0140);">t2.large</div><div class="t" style="left:869.63px;top:289px;font-size:13px;color:#037f0c;transform:scaleX(0.9689);">2/2 checks passed</div><div class="t" style="left:987.70px;top:289px;font-size:13px;color:#0972d3;transform:scaleX(0.9729);">View alarms</div><div class="t" style="left:1103.21px;top:289px;font-size:13px;color:#000716;transform:scaleX(0.9900);">us-east-1e</div><div style="position:absolute;left:1257.6px;top:287px;width:59.4px;height:18.2px;overflow:hidden"><div class="t" style="left:0;top:2px;font-size:13px;color:#000716;transform:scaleX(1.0);">ec2-107-22-1</div></div><div class="t" style="left:267.40px;top:318px;font-size:13px;color:#000716;transform:scaleX(1.0304);">virtualtechbox…</div><div class="t" style="left:391.99px;top:318px;font-size:13px;color:#0972d3;transform:scaleX(1.0145);">i-02fc5e02a3979962c</div><div class="t" style="left:591.02px;top:318px;font-size:13px;color:#037f0c;transform:scaleX(0.9787);">Running</div><div class="t" style="left:717.40px;top:318px;font-size:13px;color:#000716;transform:scaleX(1.0318);">t2.small</div><div class="t" style="left:869.63px;top:318px;font-size:13px;color:#037f0c;transform:scaleX(0.9689);">2/2 checks passed</div><div class="t" style="left:987.70px;top:318px;font-size:13px;color:#0972d3;transform:scaleX(0.9729);">View alarms</div><div class="t" style="left:1103.16px;top:318px;font-size:13px;color:#000716;transform:scaleX(1.0421);">us-east-1f</div><div style="position:absolute;left:1257.6px;top:316px;width:59.4px;height:18.2px;overflow:hidden"><div class="t" style="left:0;top:2px;font-size:13px;color:#000716;transform:scaleX(1.0);">ec2-3-83-1</div></div><div class="t" style="left:266.38px;top:347px;font-size:13px;color:#000716;transform:scaleX(1.0239);">Monitoring-Se…</div><div class="t" style="left:391.99px;top:347px;font-size:13px;color:#0972d3;transform:scaleX(1.0101);">i-02d878e88aa55a161</div><div class="t" style="left:591.02px;top:347px;font-size:13px;color:#037f0c;transform:scaleX(0.9787);">Running</div><div class="t" style="left:717.40px;top:347px;font-size:13px;color:#000716;transform:scaleX(1.0350);">t2.medium</div><div class="t" style="left:869.63px;top:347px;font-size:13px;color:#037f0c;transform:scaleX(0.9689);">2/2 checks passed</div><div class="t" style="left:987.70px;top:347px;font-size:13px;color:#0972d3;transform:scaleX(0.9729);">View alarms</div><div class="t" style="left:1103.23px;top:347px;font-size:13px;color:#000716;transform:scaleX(0.9738);">us-east-1a</div><div style="position:absolute;left:1257.6px;top:345px;width:59.4px;height:18.2px;overflow:hidden"><div class="t" style="left:0;top:2px;font-size:13px;color:#000716;transform:scaleX(1.0);">ec2-54-165</div></div><div class="t" style="left:267.40px;top:376px;font-size:13px;color:#000716;transform:scaleX(1.0304);">virtualtechbox…</div><div class="t" style="left:391.97px;top:376px;font-size:13px;color:#0972d3;transform:scaleX(1.0305);">i-0700267c754013129</div><div class="t" style="left:591.02px;top:376px;font-size:13px;color:#037f0c;transform:scaleX(0.9787);">Running</div><div class="t" style="left:717.40px;top:376px;font-size:13px;color:#000716;transform:scaleX(1.0318);">t2.small</div><div class="t" style="left:869.63px;top:376px;font-size:13px;color:#037f0c;transform:scaleX(0.9689);">2/2 checks passed</div><div class="t" style="left:987.70px;top:376px;font-size:13px;color:#0972d3;transform:scaleX(0.9729);">View alarms</div><div class="t" style="left:1103.23px;top:376px;font-size:13px;color:#000716;transform:scaleX(0.9738);">us-east-1a</div><div style="position:absolute;left:1257.6px;top:374px;width:59.4px;height:18.2px;overflow:hidden"><div class="t" style="left:0;top:2px;font-size:13px;color:#000716;transform:scaleX(1.0);">ec2-44-206</div></div><div class="t" style="left:267.40px;top:405px;font-size:13px;color:#000716;transform:scaleX(1.0304);">virtualtechbox…</div><div class="t" style="left:391.96px;top:405px;font-size:13px;color:#0972d3;transform:scaleX(1.0376);">i-01b6d6f7795629ea4</div><div class="t" style="left:591.02px;top:405px;font-size:13px;color:#037f0c;transform:scaleX(0.9787);">Running</div><div class="t" style="left:717.40px;top:405px;font-size:13px;color:#000716;transform:scaleX(1.0318);">t2.small</div><div class="t" style="left:869.63px;top:405px;font-size:13px;color:#037f0c;transform:scaleX(0.9689);">2/2 checks passed</div><div class="t" style="left:987.70px;top:405px;font-size:13px;color:#0972d3;transform:scaleX(0.9729);">View alarms</div><div class="t" style="left:1103.23px;top:405px;font-size:13px;color:#000716;transform:scaleX(0.9738);">us-east-1a</div><div style="position:absolute;left:1257.6px;top:403px;width:59.4px;height:18.2px;overflow:hidden"><div class="t" style="left:0;top:2px;font-size:13px;color:#000716;transform:scaleX(1.0);">ec2-44-212</div></div><div class="t" style="left:222.59px;top:535px;font-size:15.5px;color:#000716;font-weight:bold;transform:scaleX(1.0134);">Select an instance</div><div class="t" style="left:22.50px;top:673px;font-size:12px;color:#ffffff;transform:scaleX(1.0526);">CloudShell</div><div class="t" style="left:96.00px;top:673px;font-size:12px;color:#ffffff;transform:scaleX(1.0000);">Feedback</div><div class="t" style="left:860.00px;top:673px;font-size:12px;color:#ffffff;transform:scaleX(0.9815);">© 2024, Amazon Web Services, Inc. or its affiliates.</div><div class="t" style="left:1136.00px;top:673px;font-size:12px;color:#ffffff;transform:scaleX(1.0000);">Privacy</div><div class="t" style="left:1193.00px;top:673px;font-size:12px;color:#ffffff;transform:scaleX(0.9697);">Terms</div><div class="t" style="left:1241.00px;top:673px;font-size:12px;color:#ffffff;transform:scaleX(0.9615);">Cookie preferences</div>
</body></html>
